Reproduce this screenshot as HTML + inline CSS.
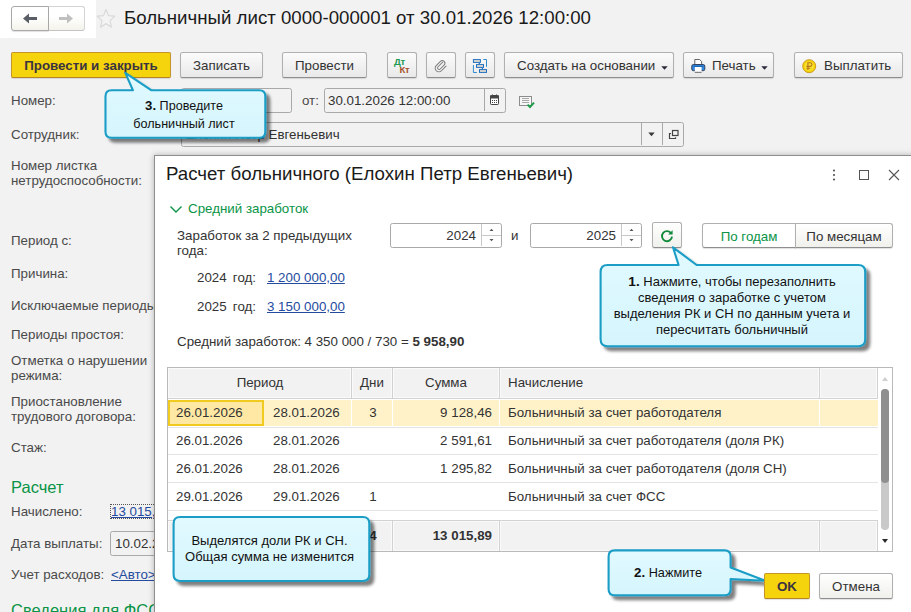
<!DOCTYPE html>
<html lang="ru">
<head>
<meta charset="utf-8">
<title>Больничный лист</title>
<style>
*{box-sizing:border-box;margin:0;padding:0}
html,body{width:911px;height:612px;overflow:hidden}
body{position:relative;background:#f2f2f2;font-family:"Liberation Sans",sans-serif;font-size:13.33px;color:#333;}
.a{position:absolute;white-space:nowrap}
.lbl{position:absolute;white-space:nowrap;color:#4a4a4a;line-height:15px}
.btn{position:absolute;height:26px;border:1px solid #b0b0b0;border-bottom-color:#8e8e8e;border-radius:2.5px;background:linear-gradient(#fbfbfb,#e9e9e9);box-shadow:0 1px 1px rgba(0,0,0,.12);color:#333;text-align:center;line-height:24px;padding-top:1px;white-space:nowrap}
.nb{background:linear-gradient(#ffffff 40%,#f4f4ec);border-color:#c2c2c2;border-bottom-color:#a8a8a8}
.dbtn{background:linear-gradient(#ffffff,#f0f0ec)}
.ybtn{background:#f5d40e;border-color:#c4952a;border-bottom-color:#b58424;border-radius:2px;font-weight:bold;color:#3a3340}
.inp{position:absolute;height:25px;border:1px solid #a9a9a9;border-radius:2.5px;background:#fff;line-height:22px;padding-top:1px;white-space:nowrap;overflow:hidden}
.mf{background:#f2f2f2}
.green{color:#0a9447}
.link{color:#254b9e;text-decoration:underline}
svg{position:absolute;overflow:visible}
#dlg{position:absolute;left:154px;top:155px;width:760px;height:460px;background:#fff;border:1px solid #8e8e8e;box-shadow:0 0 6px rgba(0,0,0,.26)}
.ct{position:absolute;text-align:center;white-space:nowrap;color:#111;font-size:12.5px;line-height:16.5px}
.ct b{font-size:1.05em;line-height:1px}
.hc{background:#f2f2f2;border:1px solid #fafafa}
.cell{position:absolute;white-space:nowrap;line-height:28px;color:#333}
</style>
</head>
<body>

<!-- top nav -->
<div class="a" style="left:0;top:0;width:96px;height:38px;background:#fff"></div>
<div class="btn nb" style="left:11px;top:6px;width:38px;height:25px;border-radius:3px 0 0 3px;border-color:#a8a8a8"></div>
<div class="btn nb" style="left:48px;top:6px;width:37px;height:25px;border-radius:0 3px 3px 0;border-color:#d4d4d4;border-bottom-color:#c4c4c4;border-left-color:#a8a8a8;box-shadow:none"></div>
<svg style="left:11px;top:6px" width="74" height="25" viewBox="0 0 74 25">
<path d="M12 12.5 L18 7.5 L18 11 L26 11 L26 14 L18 14 L18 17.5 Z" fill="#5a5e66"/>
<path d="M62 12.5 L56 7.5 L56 11 L48 11 L48 14 L56 14 L56 17.5 Z" fill="#c0c0c0"/>
</svg>
<svg style="left:96px;top:8px" width="20" height="21" viewBox="0 0 20 20" preserveAspectRatio="none"><path d="M10 1.5 L12.5 7.3 L18.7 7.8 L14 12 L15.4 18.2 L10 14.9 L4.6 18.2 L6 12 L1.3 7.8 L7.5 7.3 Z" fill="#f4f4f4" stroke="#dadada" stroke-width="1.2" stroke-linejoin="round"/></svg>
<div class="a" style="left:124px;top:6px;font-size:18.67px;line-height:24px;color:#1a1a1a">Больничный лист 0000-000001 от 30.01.2026 12:00:00</div>

<!-- toolbar -->
<div class="btn ybtn" style="left:11px;top:52px;width:160px">Провести и закрыть</div>
<div class="btn" style="left:180px;top:52px;width:83px">Записать</div>
<div class="btn" style="left:282px;top:52px;width:85px">Провести</div>
<div class="btn" style="left:387px;top:52px;width:30px"></div>
<div class="btn" style="left:426px;top:52px;width:30px"></div>
<div class="btn" style="left:465px;top:52px;width:30px"></div>
<div class="btn" style="left:504px;top:52px;width:170px;text-align:left;padding-left:12px">Создать на основании</div>
<div class="btn" style="left:683px;top:52px;width:91px;text-align:left;padding-left:28px">Печать</div>
<div class="btn" style="left:794px;top:52px;width:109px;text-align:left;padding-left:29px">Выплатить</div>

<!-- toolbar icons -->
<div class="a" style="left:394px;top:57px;font-size:9.5px;font-weight:bold;line-height:10px;color:#1f9a55;letter-spacing:-0.3px">Дт</div>
<div class="a" style="left:399.5px;top:64.5px;font-size:9.5px;font-weight:bold;line-height:10px;color:#a5522a;letter-spacing:-0.3px">Кт</div>
<svg style="left:434px;top:58.5px" width="14" height="14" viewBox="0 0 16 16"><g transform="rotate(-45 8 8)"><path d="M12.5 6.2 H5 a1.8 1.8 0 0 0 0 3.6 H11.2 a3 3 0 0 0 0 -6 H4.5 a4.2 4.2 0 0 0 0 8.4 H12" fill="none" stroke="#7a7a7a" stroke-width="1.1" stroke-linecap="round"/></g></svg>
<svg style="left:472px;top:58px" width="16" height="16" viewBox="0 0 16 16">
<path d="M11.3 1.5 H14.5 V8.8 M1.4 7 V14.5 H4.8" fill="none" stroke="#2f8ad0" stroke-width="1"/>
<path d="M7.3 4.9 V6.1 M10.4 9.9 V11.1" fill="none" stroke="#1f6fc0" stroke-width="1.2"/>
<rect x="1.4" y="1.6" width="7" height="2.8" fill="#e2dbd0" stroke="#1f6fc0" stroke-width="1"/>
<rect x="4.5" y="6.6" width="7" height="2.8" fill="#e2dbd0" stroke="#1f6fc0" stroke-width="1"/>
<rect x="7.5" y="11.6" width="7" height="2.8" fill="#e2dbd0" stroke="#1f6fc0" stroke-width="1"/>
</svg>
<svg style="left:660.5px;top:65.5px" width="7" height="4" viewBox="0 0 7 4"><path d="M0.3 0.3 H6.7 L3.5 3.8 Z" fill="#2a2a3a"/></svg>
<svg style="left:760.5px;top:65.5px" width="7" height="4" viewBox="0 0 7 4"><path d="M0.3 0.3 H6.7 L3.5 3.8 Z" fill="#2a2a3a"/></svg>
<svg style="left:691px;top:58px" width="15" height="16" viewBox="0 0 15 16">
<path d="M3.8 1.5 H8.6 L10.6 3.5 V7 H3.8 Z" fill="#fff" stroke="#555" stroke-width="0.9"/>
<rect x="0.8" y="6.5" width="13" height="6.2" rx="1.6" fill="#2f86dc" stroke="#34425e" stroke-width="1"/>
<rect x="3.8" y="9" width="6.8" height="5.3" fill="#fff"/>
<path d="M3.8 14.3 H10.6" stroke="#555" stroke-width="0.9"/>
<rect x="2.6" y="7.8" width="9.4" height="1" fill="#1d5fae"/>
</svg>
<svg style="left:802px;top:59px" width="15" height="15" viewBox="0 0 15 15">
<circle cx="7.2" cy="7.2" r="6.5" fill="#f4d408" stroke="#cf9a22" stroke-width="1"/>
<circle cx="7.2" cy="7.2" r="4.8" fill="#f7df2e"/>
<path d="M5.9 11 V3.7 H8.1 a1.85 1.85 0 0 1 0 3.7 H4.5 M4.5 9.3 H8.2" fill="none" stroke="#b8761e" stroke-width="1.1"/>
</svg>

<!-- row: number/date -->
<div class="lbl" style="left:11px;top:93px">Номер:</div>
<div class="inp mf" style="left:181px;top:88px;width:111px;padding-left:4px">0000-000001</div>
<div class="lbl" style="left:302px;top:93px">от:</div>
<div class="inp mf" style="left:324px;top:88px;width:182px;padding-left:3px">30.01.2026 12:00:00</div>
<div class="a" style="left:484px;top:89px;width:1px;height:22px;background:#a9a9a9"></div>

<!-- row: employee -->
<div class="lbl" style="left:11px;top:127px">Сотрудник:</div>
<div class="inp mf" style="left:181px;top:122px;width:503px;padding-left:3.5px">Елохин Петр Евгеньевич</div>
<div class="a" style="left:641px;top:123px;width:1px;height:22px;background:#a9a9a9"></div>
<div class="a" style="left:662px;top:123px;width:1px;height:22px;background:#a9a9a9"></div>

<svg style="left:490px;top:94px" width="10" height="12" viewBox="0 0 10 12">
<rect x="0.5" y="1.5" width="8" height="9" rx="0.8" fill="#fff" stroke="#454545" stroke-width="1"/>
<rect x="0" y="1.5" width="9" height="3" fill="#454545"/>
<rect x="2" y="0.5" width="1" height="1.6" fill="#454545"/><rect x="6" y="0.5" width="1" height="1.6" fill="#454545"/>
<g fill="#454545"><rect x="2" y="6" width="1" height="1"/><rect x="4" y="6" width="1" height="1"/><rect x="6" y="6" width="1" height="1"/><rect x="2" y="8" width="1" height="1"/><rect x="4" y="8" width="1" height="1"/><rect x="6" y="8" width="1" height="1"/></g>
</svg>
<svg style="left:519px;top:95px" width="17" height="14" viewBox="0 0 17 14">
<rect x="0.5" y="1.5" width="12" height="9" fill="#f6f6f6" stroke="#8c8c8c" stroke-width="1"/>
<path d="M3 3.5 H10 M3 5.5 H10 M3 7.5 H10" stroke="#a8a8a8" stroke-width="1" shape-rendering="crispEdges"/>
<path d="M8.6 9.6 L11 12 L15 7.6" fill="none" stroke="#1f9a4a" stroke-width="2"/>
</svg>
<svg style="left:648px;top:132px" width="7" height="5" viewBox="0 0 7 5"><path d="M0.3 0.5 H6.7 L3.5 4.3 Z" fill="#3a3a3a"/></svg>
<svg style="left:668px;top:129px" width="11" height="11" viewBox="0 0 11 11">
<rect x="4.5" y="1.5" width="5.5" height="5" fill="#f2f2f2" stroke="#444" stroke-width="1.2"/>
<path d="M3 4.5 H1.5 V9.5 H7.5 V8.2" fill="none" stroke="#444" stroke-width="1.2"/>
</svg>

<!-- left labels -->
<div class="lbl" style="left:11px;top:158px">Номер листка<br>нетрудоспособности:</div>
<div class="lbl" style="left:11px;top:233px">Период с:</div>
<div class="lbl" style="left:11px;top:266px">Причина:</div>
<div class="lbl" style="left:11px;top:298px">Исключаемые периоды</div>
<div class="lbl" style="left:11px;top:327px">Периоды простоя:</div>
<div class="lbl" style="left:11px;top:353px">Отметка о нарушении<br>режима:</div>
<div class="lbl" style="left:11px;top:394px">Приостановление<br>трудового договора:</div>
<div class="lbl" style="left:11px;top:440px">Стаж:</div>
<div class="a green" style="left:11px;top:477px;font-size:16.5px;line-height:20px">Расчет</div>
<div class="lbl" style="left:11px;top:504px">Начислено:</div>
<div class="a link" style="left:111px;top:504px;line-height:15px">13 015,89</div>
<div class="a" style="left:110px;top:504px;width:70px;height:15px;border:1px dotted #555"></div>
<div class="lbl" style="left:11px;top:536px">Дата выплаты:</div>
<div class="inp mf" style="left:110px;top:531px;width:100px;padding-left:4px">10.02.2026</div>
<div class="lbl" style="left:11px;top:567px">Учет расходов:</div>
<div class="a link" style="left:111px;top:567px;line-height:15px">&lt;Авто&gt;</div>
<div class="a green" style="left:11px;top:600px;font-size:16.5px;line-height:20px">Сведения для ФСС</div>

<!-- dialog -->
<div id="dlg"></div>
<div class="a" style="left:166px;top:162px;font-size:18.67px;line-height:24px;color:#1a1a1a">Расчет больничного (Елохин Петр Евгеньевич)</div>
<svg style="left:826px;top:166px" width="80" height="18" viewBox="0 0 80 18">
<circle cx="8" cy="4.5" r="1.1" fill="#555"/><circle cx="8" cy="9" r="1.1" fill="#555"/><circle cx="8" cy="13.5" r="1.1" fill="#555"/>
<rect x="33.5" y="4.5" width="9" height="9" fill="none" stroke="#555" stroke-width="1"/>
<path d="M63 4 L73 14 M73 4 L63 14" stroke="#555" stroke-width="1.1" fill="none"/>
</svg>

<svg style="left:169px;top:204px" width="14" height="10" viewBox="0 0 14 10"><path d="M1.5 2.5 L7 8 L12.5 2.5" stroke="#0a9447" stroke-width="1.4" fill="none"/></svg>
<div class="a green" style="left:188px;top:201px;line-height:16px">Средний заработок</div>
<div class="lbl" style="left:177px;top:228px;color:#333">Заработок за 2 предыдущих<br>года:</div>

<div class="inp" style="left:390px;top:223px;width:112px;text-align:right;padding-right:25px">2024</div>
<div class="a" style="left:481px;top:224px;width:1px;height:22px;background:#c8c8c8"></div>
<div class="lbl" style="left:511px;top:228px;color:#333">и</div>
<div class="inp" style="left:530px;top:223px;width:112px;text-align:right;padding-right:25px">2025</div>
<div class="a" style="left:621px;top:224px;width:1px;height:22px;background:#c8c8c8"></div>
<div class="btn dbtn" style="left:652px;top:222px;width:30px"></div>
<svg style="left:660px;top:229px" width="14" height="14" viewBox="0 0 14 14"><path d="M11.2 4.4 A5 5 0 1 0 12 7.6" fill="none" stroke="#118a3c" stroke-width="1.9"/><path d="M8.2 5.6 L12.6 1.2 L12.6 5.6 Z" fill="#118a3c"/></svg>
<div class="btn green" style="left:702px;top:223px;width:94px;height:25px;line-height:23px;border-radius:3px 0 0 3px;background:#fff;color:#0a9447">По годам</div>
<div class="btn dbtn" style="left:795px;top:223px;width:98px;height:25px;line-height:23px;border-radius:0 3px 3px 0">По месяцам</div>

<div class="a" style="left:482px;top:235px;width:19px;height:1px;background:#c8c8c8"></div>
<div class="a" style="left:622px;top:235px;width:19px;height:1px;background:#c8c8c8"></div>
<svg style="left:489px;top:228px" width="5" height="14" viewBox="0 0 5 14"><path d="M0.5 3 L2.5 0.8 L4.5 3 Z M0.5 11 L2.5 13.2 L4.5 11 Z" fill="#555"/></svg>
<svg style="left:629px;top:228px" width="5" height="14" viewBox="0 0 5 14"><path d="M0.5 3 L2.5 0.8 L4.5 3 Z M0.5 11 L2.5 13.2 L4.5 11 Z" fill="#555"/></svg>
<div class="lbl" style="left:197px;top:270px;color:#333;word-spacing:2.5px">2024 год:</div>
<div class="a link" style="left:267px;top:270px;line-height:15px">1 200 000,00</div>
<div class="lbl" style="left:197px;top:299px;color:#333;word-spacing:2.5px">2025 год:</div>
<div class="a link" style="left:267px;top:299px;line-height:15px">3 150 000,00</div>
<div class="lbl" style="left:177px;top:334px;color:#333">Средний заработок: 4 350 000 / 730 = <b>5 958,90</b></div>

<!-- table -->
<div class="a" style="left:167px;top:367px;width:726px;height:185px;border:1px solid #b9b9b9;background:#fff"></div>
<div class="a" style="left:168px;top:368px;width:710px;height:31px;background:#d2d2d2"></div>
<div class="a hc" style="left:168px;top:368px;width:183px;height:30px"></div>
<div class="a hc" style="left:352px;top:368px;width:40px;height:30px"></div>
<div class="a hc" style="left:393px;top:368px;width:106px;height:30px"></div>
<div class="a hc" style="left:500px;top:368px;width:319px;height:30px"></div>
<div class="a hc" style="left:820px;top:368px;width:57px;height:30px"></div>
<div class="a" style="left:168px;top:399.6px;width:710px;height:26.4px;background:#fff2c9"></div>
<div class="a" style="left:168px;top:399.6px;width:96px;height:26.4px;background:#ffe8a3;border:2px solid #f0ca1e"></div>
<div class="a" style="left:351px;top:399px;width:1px;height:27px;background:#fff"></div>
<div class="a" style="left:392px;top:399px;width:1px;height:27px;background:#fff"></div>
<div class="a" style="left:499px;top:399px;width:1px;height:27px;background:#fff"></div>
<div class="a" style="left:819px;top:399px;width:1px;height:27px;background:#fff"></div>
<div class="a" style="left:168px;top:427px;width:710px;height:1px;background:#e4e4e4"></div>
<div class="a" style="left:168px;top:454px;width:710px;height:1px;background:#e4e4e4"></div>
<div class="a" style="left:168px;top:482px;width:710px;height:1px;background:#e4e4e4"></div>
<div class="a" style="left:168px;top:510px;width:710px;height:1px;background:#e4e4e4"></div>
<div class="a" style="left:168px;top:520px;width:710px;height:31px;background:#d2d2d2"></div>
<div class="a hc" style="left:168px;top:521px;width:183px;height:30px"></div>
<div class="a hc" style="left:352px;top:521px;width:40px;height:30px"></div>
<div class="a hc" style="left:393px;top:521px;width:106px;height:30px"></div>
<div class="a hc" style="left:500px;top:521px;width:319px;height:30px"></div>
<div class="a hc" style="left:820px;top:521px;width:57px;height:30px"></div>
<!-- header text -->
<div class="cell" style="left:168px;top:368px;width:184px;text-align:center;line-height:30px">Период</div>
<div class="cell" style="left:352px;top:368px;width:40px;text-align:center;line-height:30px">Дни</div>
<div class="cell" style="left:393px;top:368px;width:106px;text-align:center;line-height:30px">Сумма</div>
<div class="cell" style="left:508px;top:368px;line-height:30px">Начисление</div>
<!-- rows -->
<div class="cell" style="left:176px;top:399px">26.01.2026</div><div class="cell" style="left:273px;top:399px">28.01.2026</div><div class="cell" style="left:353px;top:399px;width:40px;text-align:center">3</div><div class="cell" style="left:394px;top:399px;width:98px;text-align:right">9 128,46</div><div class="cell" style="left:508px;top:399px">Больничный за счет работодателя</div>
<div class="cell" style="left:176px;top:427px">26.01.2026</div><div class="cell" style="left:273px;top:427px">28.01.2026</div><div class="cell" style="left:394px;top:427px;width:98px;text-align:right">2 591,61</div><div class="cell" style="left:508px;top:427px">Больничный за счет работодателя (доля РК)</div>
<div class="cell" style="left:176px;top:455px">26.01.2026</div><div class="cell" style="left:273px;top:455px">28.01.2026</div><div class="cell" style="left:394px;top:455px;width:98px;text-align:right">1 295,82</div><div class="cell" style="left:508px;top:455px">Больничный за счет работодателя (доля СН)</div>
<div class="cell" style="left:176px;top:483px">29.01.2026</div><div class="cell" style="left:273px;top:483px">29.01.2026</div><div class="cell" style="left:353px;top:483px;width:40px;text-align:center">1</div><div class="cell" style="left:508px;top:483px">Больничный за счет ФСС</div>
<div class="cell" style="left:353px;top:522px;width:40px;text-align:center;font-weight:bold">4</div><div class="cell" style="left:394px;top:522px;width:98px;text-align:right;font-weight:bold">13 015,89</div>
<!-- scrollbar -->
<div class="a" style="left:878px;top:368px;width:14px;height:183px;background:#fff"></div>
<div class="a" style="left:881px;top:389px;width:8px;height:141px;background:#c9c9c9;border-radius:4px"></div>
<div class="a" style="left:881px;top:389px;width:8px;height:94px;background:#8f8f8f;border-radius:4px"></div>
<svg style="left:882px;top:377px" width="6" height="4" viewBox="0 0 6 4"><path d="M0 4 L3 0 L6 4 Z" fill="#cfcfcf"/></svg>
<svg style="left:882px;top:539px" width="6" height="4" viewBox="0 0 6 4"><path d="M0 0 L3 4 L6 0 Z" fill="#2a2a2a"/></svg>

<!-- dialog buttons -->
<div class="btn ybtn" style="left:764px;top:573px;width:46px;height:26px;line-height:24px;z-index:5">OK</div>
<div class="btn dbtn" style="left:819px;top:573px;width:74px;height:26px;line-height:24px">Отмена</div>
<!-- callouts -->
<svg style="left:0;top:0" width="911" height="612" viewBox="0 0 911 612">
<defs>
<linearGradient id="cg" x1="0" y1="0" x2="0" y2="1"><stop offset="0" stop-color="#e1faff"/><stop offset="1" stop-color="#d5f5fd"/></linearGradient>
<filter id="sh" x="-20%" y="-30%" width="140%" height="170%"><feGaussianBlur in="SourceAlpha" stdDeviation="1.4"/><feOffset dx="4" dy="4"/><feComponentTransfer><feFuncA type="linear" slope="0.5"/></feComponentTransfer><feMerge><feMergeNode/><feMergeNode in="SourceGraphic"/></feMerge></filter>
</defs>
<path d="M111.5 90.3 L133 90.3 L125.3 72.8 L151.5 90.3 L259.3 90.3 Q265.3 90.3 265.3 96.3 L265.3 131.8 Q265.3 137.8 259.3 137.8 L111.5 137.8 Q105.5 137.8 105.5 131.8 L105.5 96.3 Q105.5 90.3 111.5 90.3 Z" fill="url(#cg)" stroke="#1a9dc6" stroke-width="2.1" stroke-linejoin="round" filter="url(#sh)"/>
<path d="M607.6 265 L678.6 265 L673 247.3 L696.6 265 L858.2 265 Q865.2 265 865.2 272 L865.2 339.3 Q865.2 346.3 858.2 346.3 L607.6 346.3 Q600.6 346.3 600.6 339.3 L600.6 272 Q600.6 265 607.6 265 Z" fill="url(#cg)" stroke="#1a9dc6" stroke-width="2.1" stroke-linejoin="round" filter="url(#sh)"/>
<path d="M614.6 550.4 L724.6 550.4 Q730.6 550.4 730.6 556.4 L730.6 567.5 L765.5 580.8 L730.6 579 L730.6 589.2 Q730.6 595.2 724.6 595.2 L614.6 595.2 Q608.6 595.2 608.6 589.2 L608.6 556.4 Q608.6 550.4 614.6 550.4 Z" fill="url(#cg)" stroke="#1a9dc6" stroke-width="2.1" stroke-linejoin="round" filter="url(#sh)"/>
<path d="M180.1 517 L362.8 517 Q369.3 517 369.3 523.5 L369.3 574.5 Q369.3 581 362.8 581 L180.1 581 Q173.6 581 173.6 574.5 L173.6 523.5 Q173.6 517 180.1 517 Z" fill="url(#cg)" stroke="#1a9dc6" stroke-width="2.1" stroke-linejoin="round" filter="url(#sh)"/>
</svg>
<div class="ct" style="left:104px;top:97px;width:160px;font-size:12.6px;line-height:18px"><b>3.</b> Проведите<br>больничный лист</div>
<div class="ct" style="left:600px;top:274px;width:264px;font-size:13px;line-height:16.1px"><b>1.</b> Нажмите, чтобы перезаполнить<br>сведения о заработке с учетом<br>выделения РК и СН по данным учета и<br>пересчитать больничный</div>
<div class="ct" style="left:609px;top:564.8px;width:118px;font-size:12.7px"><b>2.</b> Нажмите</div>
<div class="ct" style="left:172px;top:532.9px;width:195px;font-size:13px;line-height:16px">Выделятся доли РК и СН.<br>Общая сумма не изменится</div>

</body>
</html>
